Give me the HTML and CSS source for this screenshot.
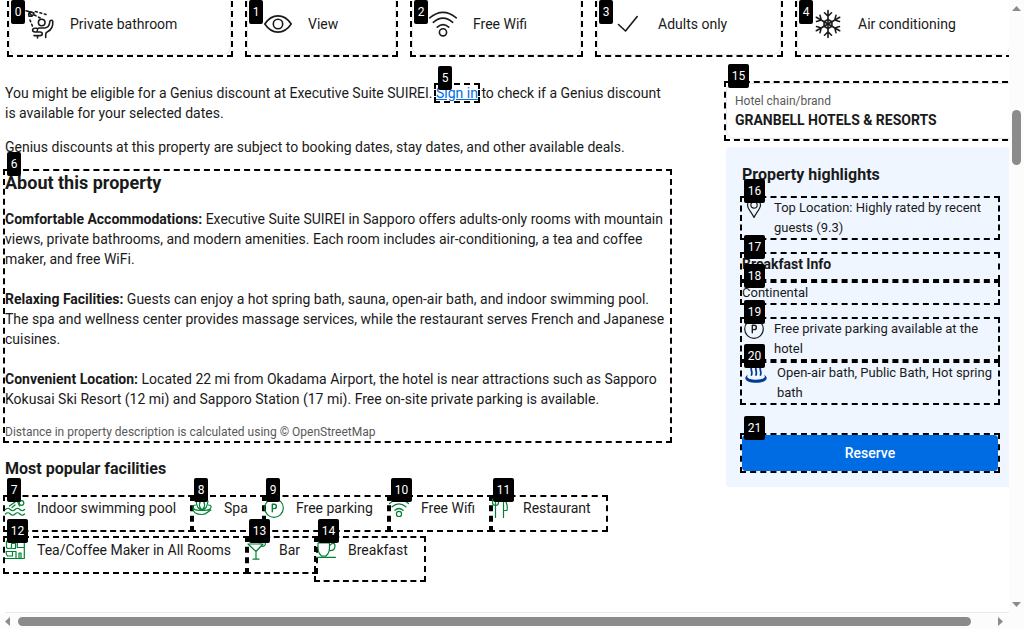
FILE: index.html
```
<!DOCTYPE html>
<html lang="en">
<head>
<meta charset="utf-8">
<title>Executive Suite SUIREI</title>
<link rel="stylesheet" href="styles.css">
</head>
<body>
<svg class="defs" aria-hidden="true">
  <symbol id="wifi" viewBox="0 0 28 28"><circle cx="14" cy="22.3" r="3.6"/><path d="M8.3 17.2q5.700-5 11.400 0M4.300 12.300q9.700-8.200 19.400 0M.7 7.800q13.300-11 26.600 0"/></symbol>
  <symbol id="parking" viewBox="0 0 20 20"><circle cx="10" cy="10" r="9.300"/><path class="bold" d="M8.300 13.800V6.300h1.900a2.100 2.100 0 0 1 0 4.300H8.300"/></symbol>
</svg>
<div class="window">
  <div class="page">
    <div class="perks">
      <div class="perk mark"><span class="tag">0</span>
        <svg class="icon28 thick" viewBox="0 0 28 28"><circle cx="15.700" cy="12.500" r="3.300"/><path d="M0 .8l8 2.200M3 6.200c-1-3 .5-4.700 2.500-4.200 2.500.5 3 2.500.5 4.200zM3.500 3l2 2.200"/><path stroke-dasharray="1.800 2.800" d="M9.500 1.500l10.500 3M8.500 5l6.500 3.500M4 10l2.800 7"/><path d="M26.800 11.500c.3 5-1.300 8.500-5.300 10.200-1.500.6-1.800 1.300-1.800 2.800v3M26.800 11.500c-.2-1.800-2.600-1.600-3 .2-.3 3.500-1.500 5.800-5 6.300h-5.300c-2 0-2.300 1-2.300 4M14 22H9c-3.200 0-3.200-3.800 0-3.800h2M14 22c3 0 3 3.600 0 3.600H8M11.500 26v2"/></svg>
        <span>Private bathroom</span></div>
      <div class="perk mark"><span class="tag">1</span>
        <svg class="icon28 thick" viewBox="0 0 28 28"><circle cx="14" cy="14" r="4.700"/><path d="M.8 14C8 3.200 20 3.200 27.200 14 20 24.800 8 24.800.8 14z"/></svg>
        <span>View</span></div>
      <div class="perk mark"><span class="tag">2</span>
        <svg class="icon28 thick"><use href="#wifi"/></svg>
        <span>Free Wifi</span></div>
      <div class="perk mark"><span class="tag">3</span>
        <svg class="icon28 thick" viewBox="0 0 28 28"><path d="M4.500 14.500l7 6.500L23.200 6.500"/></svg>
        <span>Adults only</span></div>
      <div class="perk last mark"><span class="tag">4</span>
        <svg class="icon28 thick" viewBox="0 0 28 28"><g id="arms"><path id="arm" d="M14 14V.5M10.500 2.800l3.500 3.400 3.500-3.400"/><use href="#arm" transform="rotate(60 14 14)"/><use href="#arm" transform="rotate(120 14 14)"/></g><use href="#arms" transform="rotate(180 14 14)"/><path d="M14 9.500l3.900 2.250v4.500L14 18.500l-3.900-2.250v-4.500z"/></svg>
        <span>Air conditioning</span></div>
    </div>

    <div class="columns">
      <main class="main">
        <p class="para">You might be eligible for a Genius discount at Executive Suite SUIREI. <a class="signin mark" href="#"><span class="tag">5</span>Sign in</a> to check if a Genius discount<br>is available for your selected dates.</p>
        <p class="para">Genius discounts at this property are subject to booking dates, stay dates, and other available deals.</p>
        <section class="about mark"><span class="tag">6</span>
          <h2 class="title">About this property</h2>
          <p class="desc"><b>Comfortable Accommodations:</b> Executive Suite SUIREI in Sapporo offers adults-only rooms with mountain<br>views, private bathrooms, and modern amenities. Each room includes air-conditioning, a tea and coffee<br>maker, and free WiFi.</p>
          <p class="desc"><b>Relaxing Facilities:</b> Guests can enjoy a hot spring bath, sauna, open-air bath, and indoor swimming pool.<br>The spa and wellness center provides massage services, while the restaurant serves French and Japanese<br>cuisines.</p>
          <p class="desc"><b>Convenient Location:</b> Located 22 mi from Okadama Airport, the hotel is near attractions such as Sapporo<br>Kokusai Ski Resort (12 mi) and Sapporo Station (17 mi). Free on-site private parking is available.</p>
          <p class="note">Distance in property description is calculated using © OpenStreetMap</p>
        </section>
        <h3 class="subtitle">Most popular facilities</h3>
        <div class="facilities">
          <div class="facility w187 mark"><span class="tag">7</span>
            <svg class="icon20 green" viewBox="0 0 20 20"><circle cx="16.500" cy="5" r="2.300"/><path d="M5 2.500l6-1 3.500 8M4.500 9.500L11.500 4.500M7 11l3-2.500M.5 13q2.500-2.500 4.800 0t4.800 0 4.800 0 4.600 0M.5 17.500q2.500-2.500 4.800 0t4.800 0 4.800 0 4.600 0" transform="translate(0 -1.500)"/></svg>
            <span>Indoor swimming pool</span></div>
          <div class="facility w72 mark"><span class="tag">8</span>
            <svg class="icon20 green" viewBox="0 0 20 20"><path d="M10 1c3.500 4 3.500 8 0 11-3.500-3-3.500-7 0-11zM4 3c1 6 2 8 6 9 4-1 5-3 6-9M3.500 7C0 7 .5 9 2 11c2 2 14 2 16 0 1.500-2 2-4-1.500-4M1 10.500c0 4.500 3 6 9 6 5 0 5.500-3 9-4.500"/></svg>
            <span>Spa</span></div>
          <div class="facility w125 mark"><span class="tag">9</span>
            <svg class="icon20 green"><use href="#parking"/></svg>
            <span>Free parking</span></div>
          <div class="facility w102 mark"><span class="tag">10</span>
            <svg class="icon20 green wide"><use href="#wifi"/></svg>
            <span>Free Wifi</span></div>
          <div class="facility w115 mark"><span class="tag">11</span>
            <svg class="icon20 green" viewBox="0 0 20 20"><path d="M4.500 1v18.500M1.500 1v3.500c0 4 6 4 6 0V1M12.500 19.500V1c4 2 4 9 3.500 11.500h-3.500"/></svg>
            <span>Restaurant</span></div>
        </div>
        <div class="facilities">
          <div class="facility tall w242 mark"><span class="tag">12</span>
            <svg class="icon20 green" viewBox="0 0 20 20"><path d="M1.500 1v6c0 2 5 2 5 0V3.500h4v5H7M1 11.500h6.500V16H2.500C1.500 15 1 13 1 11.500zM0 18.500h19.300V2.500h-7v5h7M11 18.500v-7h-3.500M14 18.500V13h2v5.500"/></svg>
            <span>Tea/Coffee Maker in All Rooms</span></div>
          <div class="facility tall w69 mark"><span class="tag">13</span>
            <svg class="icon20 green" viewBox="0 0 20 20"><path d="M1 4h15L9 11.500zM9 11.500v7.500M6 19.200h6M13 3c1-4 7-2 5 2-1 1.500-2.500 1.500-4 1"/></svg>
            <span>Bar</span></div>
          <div class="facility taller w108 mark"><span class="tag">14</span>
            <svg class="icon20 green" viewBox="0 0 20 20"><path d="M2 3h11.500c0 6 .5 9.500-3.500 13H5.500C1.500 12.500 2 9 2 3zM14.500 5c1-2 4.500-2.500 4.500.7 0 4-2.500 5-5 5M0 17.300h19.500"/></svg>
            <span>Breakfast</span></div>
        </div>
      </main>

      <aside class="side">
        <div class="chain mark"><span class="tag">15</span>
          <div class="chain-label">Hotel chain/brand</div>
          <div class="chain-name">GRANBELL HOTELS &amp; RESORTS</div>
        </div>
        <div class="highlights">
          <h3 class="side-title">Property highlights</h3>
          <div class="point mark"><span class="tag">16</span>
            <svg class="pin" viewBox="0 0 20 20"><circle cx="10" cy="7" r="3.200"/><path d="M10 19.500C8 14.500 3.500 11 3.500 7a6.500 6.500 0 0 1 13 0c0 4-4.500 7.500-6.500 12.500z"/></svg>
            <span>Top Location: Highly rated by recent<br>guests (9.3)</span></div>
          <div class="info mark"><span class="tag">17</span>Breakfast Info</div>
          <div class="kind mark"><span class="tag">18</span>Continental</div>
          <div class="point mark"><span class="tag">19</span>
            <svg class="lot"><use href="#parking"/></svg>
            <span>Free private parking available at the<br>hotel</span></div>
          <div class="point spring mark"><span class="tag">20</span>
            <svg class="bath" viewBox="0 0 22 22"><path d="M6.500 5c-1.500 3 1.500 4 0 8M11 3c-1.500 4 1.500 6 0 10M15.500 5c-1.500 3 1.500 4 0 8"/><path class="basin" d="M3 12.500C-4 17.500 4 20.800 11 20.800S26 17.500 19 12.500c3 4-3 5.200-8 5.200S0 16.500 3 12.500z"/></svg>
            <span>Open-air bath, Public Bath, Hot spring<br>bath</span></div>
          <button class="reserve mark"><span class="tag">21</span>Reserve</button>
        </div>
      </aside>
    </div>
    <hr class="rule">
  </div>
  <div class="vbar"><svg class="arrow" viewBox="0 0 9 5"><path d="M0 5l4.500-5L9 5z"/></svg><i class="vthumb"></i><svg class="arrow end" viewBox="0 0 9 5"><path d="M0 0l4.500 5L9 0z"/></svg></div>
  <div class="hbar"><svg class="harrow" viewBox="0 0 5 9"><path d="M5 0L0 4.500 5 9z"/></svg><i class="hthumb"></i><svg class="harrow end" viewBox="0 0 5 9"><path d="M0 0l5 4.500L0 9z"/></svg></div>
</div>
</body>
</html>
```
FILE: styles.css
```
* { box-sizing: border-box; }
body { margin: 0; background: #fff; color: #1a1a1a; font: 14px/20px Roboto, sans-serif; overflow: hidden; }
p, h2, h3 { margin: 0; }
.defs { display: none; }
.window { display: grid; grid-template: 614px 15px / 1009px 15px; width: 1024px; height: 629px; }
.page { overflow: hidden; height: 614px; display: flex; flex-direction: column; white-space: nowrap; }

/* numbered element markers */
.mark { position: relative; }
.mark::after { content: ""; position: absolute; inset: 0; outline: 2px dashed #000; pointer-events: none; }
.tag { position: absolute; z-index: 5; left: 2px; top: -19px; height: 24px; padding: 0 3.8px; border-radius: 2px; background: #000; color: #fff; font: 400 12px/24px Roboto, sans-serif; letter-spacing: 0; }

svg { flex: none; fill: none; stroke: #1a1a1a; stroke-width: 1.2; stroke-linecap: round; stroke-linejoin: round; overflow: visible; }
.thick { stroke-width: 1.6; }
.icon28 { width: 28px; height: 28px; }
.icon20 { width: 20px; height: 20px; }
.green { stroke: #008234; stroke-width: 1.2; }
.wide { stroke-width: 1.7; }
.bold { stroke-width: 1.4; }

.perks { display: flex; gap: 16px; margin: -7px 0 0 9px; height: 62px; flex: none; }
.perk { display: flex; align-items: center; gap: 16px; padding: 0 54px 0 16px; border: 1px solid #e7e7e7; border-radius: 8px; flex: none; width: 222px; }
.perk:nth-child(2) { width: 149px; }
.perk:nth-child(3) { width: 169px; }
.perk:nth-child(4) { width: 184px; }
.perk.last { width: 213px; }
.perk::after, .chain::after { inset: -1px; }
.perk .tag { top: 6px; left: 1px; }

.columns { display: flex; gap: 56px; margin: 28px 0 0 5px; height: 529px; flex: none; }
.main { width: 665px; flex: none; }
.para { margin-bottom: 14px; }
.signin { color: #006ce4; }
.about { height: 270px; }
.title { font-size: 18px; line-height: 24px; font-weight: 700; margin-bottom: 14px; }
.desc { margin-bottom: 20px; }
.desc b { font-weight: 700; }
.note { margin-top: -6px; font-size: 12px; line-height: 18px; color: #595959; }
.subtitle { margin: 16px 0; font-size: 16px; line-height: 24px; font-weight: 700; }
.facilities { display: flex; margin-bottom: 8px; }
.facility { display: flex; gap: 12px; height: 33px; padding-top: 1px; line-height: 21px; }
.tall { height: 34px; padding-top: 2px; }
.taller { height: 42px; padding-top: 2px; }
.w187 { width: 187px; }
.w72 { width: 72px; }
.w125 { width: 125px; }
.w102 { width: 102px; }
.w115 { width: 115px; }
.w242 { width: 242px; }
.w69 { width: 69px; }
.w108 { width: 108px; }

.side { width: 290px; flex: none; }
.chain { height: 56px; padding: 8px 8px; border: 1px solid #e7e7e7; border-radius: 8px; }
.chain-label { font-size: 12px; line-height: 18px; color: #595959; }
.chain-name { font-weight: 700; letter-spacing: -.02px; }
.chain .tag { left: 1px; top: -20px; }
.highlights { margin-top: 8px; height: 340px; padding: 16px 27px 0 16px; background: #f0f6ff; border-radius: 4px; width: 299px; font-size: 13px; }
.side-title { font-size: 16px; line-height: 24px; margin-bottom: 11px; }
.point { width: 256px; height: 40px; padding-left: 2px; display: flex; gap: 10px; }
.pin, .lot { width: 20px; height: 20px; }
.bath { width: 22px; height: 22px; margin: -1px 0 0 1px; stroke: #003b95; stroke-width: 1.8; }
.basin { fill: #003b95; stroke: none; }
.info { width: 256px; margin-top: 16px; height: 25px; font-size: 14px; font-weight: 700; }
.kind { width: 256px; margin: 4px 0 16px; height: 20px; }
.spring { margin-top: 4px; }
.reserve { display: block; width: 256px; height: 36px; margin-top: 32px; padding: 0; border: 0; border-radius: 4px; background: #006ce4; color: #fff; font: 500 14px/36px Roboto, sans-serif; }
.rule { width: 1004px; height: 1px; margin: 0 0 0 5px; border: 0; background: #e7e7e7; flex: none; }

.arrow, .harrow { fill: #8b8b8b; stroke: none; }
.vbar { background: #fcfcfc; display: flex; flex-direction: column; align-items: center; padding: 6px 0 7px; height: 614px; }
.arrow { width: 9px; height: 5px; }
.vthumb { width: 9px; height: 55px; margin-top: 99px; border-radius: 5px; background: #8b8b8b; }
.hbar { grid-column: 1 / 3; background: #fcfcfc; display: flex; align-items: center; padding: 0 21px 0 5px; }
.harrow { width: 5px; height: 9px; }
.hthumb { width: 953px; height: 9px; margin-left: 8px; border-radius: 5px; background: #8b8b8b; }
.arrow.end { margin-top: auto; }
.harrow.end { margin-left: auto; }
```
